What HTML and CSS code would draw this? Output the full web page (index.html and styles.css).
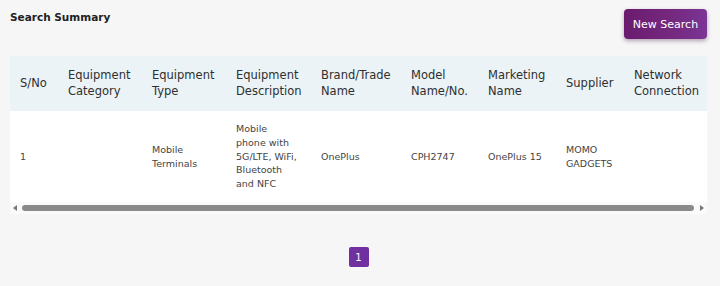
FILE: index.html
```html
<!DOCTYPE html>
<html>
<head>
<meta charset="utf-8">
<link rel="stylesheet" href="styles.css">
</head>
<body>
<div class="page">
  <div class="topbar">
    <h2 class="title">Search Summary</h2>
    <button class="btn-new">New Search</button>
  </div>
  <div class="table-card">
    <div class="table-scroll">
      <table class="summary">
        <colgroup>
          <col class="c-sno"><col class="c-cat"><col class="c-type"><col class="c-desc"><col class="c-brand"><col class="c-model"><col class="c-mkt"><col class="c-sup"><col class="c-net"><col class="c-extra">
        </colgroup>
        <thead>
          <tr>
            <th>S/No</th>
            <th>Equipment Category</th>
            <th>Equipment Type</th>
            <th>Equipment Description</th>
            <th>Brand/Trade Name</th>
            <th>Model Name/No.</th>
            <th>Marketing Name</th>
            <th>Supplier</th>
            <th>Network Connection</th>
            <th></th>
          </tr>
        </thead>
        <tbody>
          <tr>
            <td>1</td>
            <td></td>
            <td>Mobile Terminals</td>
            <td>Mobile<br>phone with<br>5G/LTE, WiFi,<br>Bluetooth<br>and NFC</td>
            <td>OnePlus</td>
            <td>CPH2747</td>
            <td>OnePlus 15</td>
            <td>MOMO GADGETS</td>
            <td></td>
            <td></td>
          </tr>
        </tbody>
      </table>
    </div>
    <div class="hscroll">
      <span class="arrow arrow-left"></span>
      <div class="track"><div class="thumb"></div></div>
      <span class="arrow arrow-right"></span>
    </div>
  </div>
  <div class="pager">
    <span class="page-num">1</span>
  </div>
</div>
</body>
</html>
```
FILE: styles.css
```css
* { box-sizing: border-box; }
html, body {
  margin: 0;
  background: #f6f6f6;
  font-family: "DejaVu Sans", "Noto Sans", sans-serif;
  color: #333;
}
.page {
  padding: 9px 13px 0 10px;
}
.topbar {
  display: flex;
  justify-content: space-between;
  align-items: flex-start;
  height: 47px;
}
.title {
  margin: 2px 0 0;
  font-size: 10.5px;
  font-weight: bold;
  color: #222;
}
.btn-new {
  width: 83px;
  height: 30px;
  border: none;
  border-radius: 4px;
  background: linear-gradient(90deg, #6a1b6e 0%, #75297f 60%, #7b3596 100%);
  color: #fff;
  font-family: inherit;
  font-size: 11px;
  box-shadow: 0 2px 4px rgba(60, 0, 60, 0.35);
  padding: 0;
}
.table-card {
  background: #fff;
  width: 697px;
}
.table-scroll {
  overflow: hidden;
}
.summary {
  border-collapse: collapse;
  table-layout: fixed;
  width: 822px;
}
.c-sno { width: 48px; }
.c-cat { width: 84px; }
.c-type { width: 84px; }
.c-desc { width: 85px; }
.c-brand { width: 90px; }
.c-model { width: 77px; }
.c-mkt { width: 78px; }
.c-sup { width: 68px; }
.c-net { width: 110px; }
.c-extra { width: 98px; }
.summary th {
  background: #ebf3f6;
  font-weight: normal;
  text-align: left;
  font-size: 11.5px;
  line-height: 16px;
  color: #2f2f2f;
  padding: 11px 10px 12px;
  height: 55px;
  vertical-align: middle;
}
.summary td {
  font-size: 9.5px;
  line-height: 13.7px;
  color: #444;
  padding: 11px 10px;
  height: 91px;
  vertical-align: middle;
}
.hscroll {
  display: flex;
  align-items: center;
  height: 12px;
  padding: 0 3px;
  background: #fafafa;
}
.arrow {
  width: 0;
  height: 0;
  border-top: 3px solid transparent;
  border-bottom: 3px solid transparent;
}
.arrow-left { border-right: 4px solid #777; margin-right: 5px; }
.arrow-right { border-left: 4px solid #777; margin-left: 6px; }
.track {
  flex: 1;
  height: 6px;
}
.thumb {
  height: 6px;
  width: 100%;
  border-radius: 3px;
  background: #8a8a8a;
}
.pager {
  display: flex;
  justify-content: center;
  padding: 33px 0 0;
}
.page-num {
  width: 20px;
  height: 20px;
  border-radius: 2px;
  background: #7030a0;
  color: #fff;
  font-size: 10px;
  display: flex;
  align-items: center;
  justify-content: center;
}
```
